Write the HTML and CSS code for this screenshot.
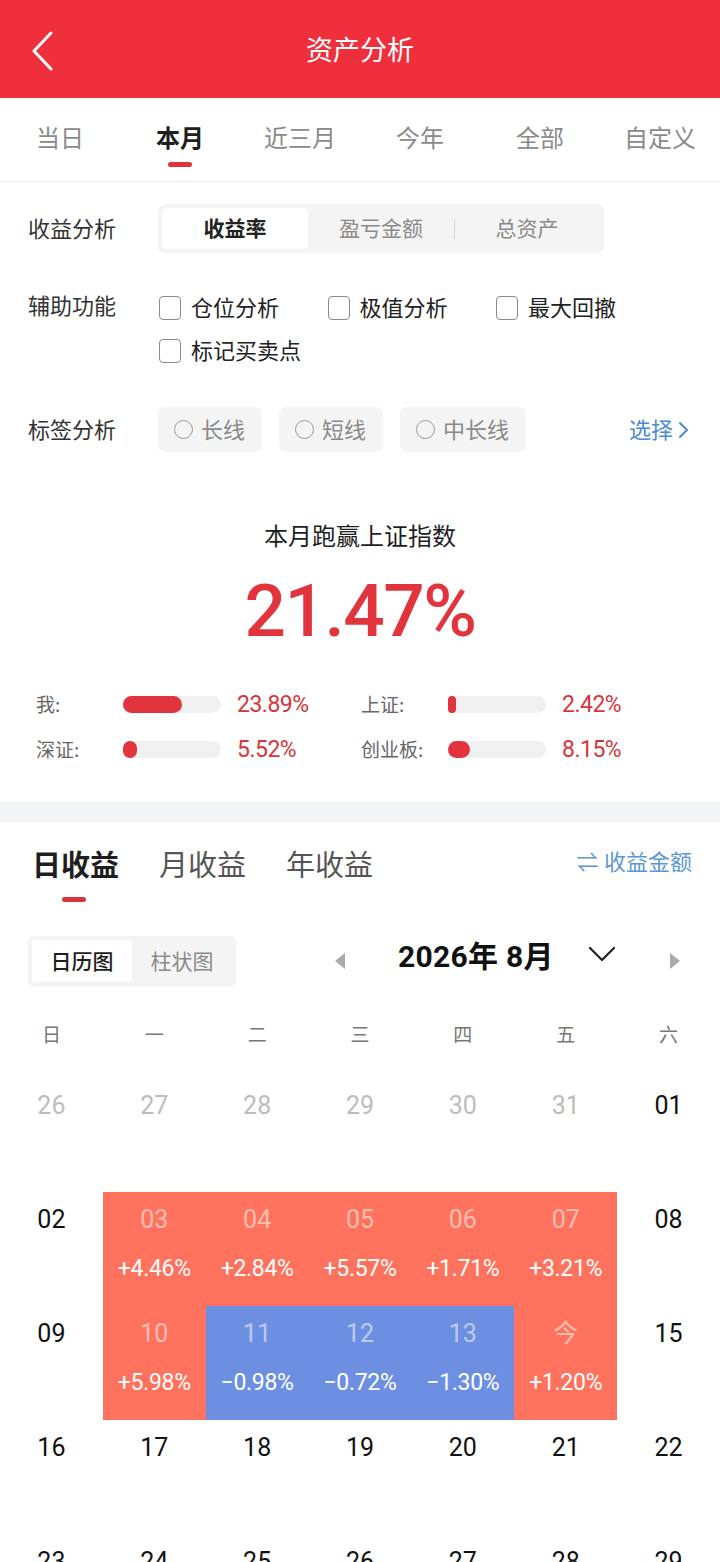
FILE: index.html
```html
<!DOCTYPE html>
<html lang="zh-CN">
<head>
<meta charset="utf-8">
<title>资产分析</title>
<link rel="stylesheet" href="styles.css">
</head>
<body>
<header class="topbar">
  <div class="back">
    <svg width="24" height="40" viewBox="0 0 24 40"><polyline points="20,2 3,20 20,38" fill="none" stroke="#fff" stroke-width="3" stroke-linecap="round" stroke-linejoin="round"/></svg>
  </div>
  <h1 class="title">资产分析</h1>
  <div></div>
</header>

<nav class="period-tabs">
  <div class="ptab">当日</div>
  <div class="ptab active">本月<span class="ind"></span></div>
  <div class="ptab">近三月</div>
  <div class="ptab">今年</div>
  <div class="ptab">全部</div>
  <div class="ptab">自定义</div>
</nav>

<section class="options">
  <div class="row row-seg">
    <div class="label">收益分析</div>
    <div class="seg">
      <div class="seg-item active">收益率</div>
      <div class="seg-item">盈亏金额</div>
      <div class="seg-div"></div>
      <div class="seg-item">总资产</div>
    </div>
  </div>
  <div class="row row-check">
    <div class="label">辅助功能</div>
    <div class="checks">
      <div class="check"><span class="box"></span>仓位分析</div>
      <div class="check"><span class="box"></span>极值分析</div>
      <div class="check"><span class="box"></span>最大回撤</div>
      <div class="check"><span class="box"></span>标记买卖点</div>
    </div>
  </div>
  <div class="row row-tags">
    <div class="label">标签分析</div>
    <div class="pills">
      <div class="pill"><span class="radio"></span>长线</div>
      <div class="pill"><span class="radio"></span>短线</div>
      <div class="pill"><span class="radio"></span>中长线</div>
    </div>
    <div class="choose">选择<svg width="12" height="18" viewBox="0 0 12 18"><polyline points="3,2 10,9 3,16" fill="none" stroke="#4a8ad6" stroke-width="2" stroke-linecap="round" stroke-linejoin="round"/></svg></div>
  </div>
</section>

<section class="summary">
  <div class="sum-title">本月跑赢上证指数</div>
  <div class="sum-value">21.47%</div>
  <div class="stats">
    <div class="stat"><span class="s-label">我:</span><span class="track"><span class="fill" style="width:59px"></span></span><span class="s-val">23.89%</span></div>
    <div class="stat"><span class="s-label">上证:</span><span class="track"><span class="fill" style="width:8px"></span></span><span class="s-val">2.42%</span></div>
    <div class="stat"><span class="s-label">深证:</span><span class="track"><span class="fill" style="width:14px"></span></span><span class="s-val">5.52%</span></div>
    <div class="stat"><span class="s-label">创业板:</span><span class="track"><span class="fill" style="width:22px"></span></span><span class="s-val">8.15%</span></div>
  </div>
</section>

<div class="band"></div>

<section class="income">
  <div class="inc-head">
    <div class="inc-tabs">
      <div class="itab active">日收益<span class="ind"></span></div>
      <div class="itab">月收益</div>
      <div class="itab">年收益</div>
    </div>
    <div class="switch">⇌ 收益金额</div>
  </div>

  <div class="cal-bar">
    <div class="toggle">
      <div class="tg-item active">日历图</div>
      <div class="tg-item">柱状图</div>
    </div>
    <div class="month-nav">
      <svg class="tri" width="12" height="18" viewBox="0 0 12 18"><polygon points="11,1 11,17 1,9" fill="#aaa"/></svg>
      <div class="month">2026年 8月</div>
      <svg class="caret" width="28" height="16" viewBox="0 0 28 16"><polyline points="2,2 14,14 26,2" fill="none" stroke="#222" stroke-width="2.2" stroke-linecap="round" stroke-linejoin="round"/></svg>
      <svg class="tri" width="12" height="18" viewBox="0 0 12 18"><polygon points="1,1 1,17 11,9" fill="#aaa"/></svg>
    </div>
  </div>

  <div class="weekdays">
    <div>日</div><div>一</div><div>二</div><div>三</div><div>四</div><div>五</div><div>六</div>
  </div>

  <div class="calendar">
    <div class="day prev"><span class="d">26</span></div>
    <div class="day prev"><span class="d">27</span></div>
    <div class="day prev"><span class="d">28</span></div>
    <div class="day prev"><span class="d">29</span></div>
    <div class="day prev"><span class="d">30</span></div>
    <div class="day prev"><span class="d">31</span></div>
    <div class="day"><span class="d">01</span></div>

    <div class="day"><span class="d">02</span></div>
    <div class="day up"><span class="d">03</span><span class="p">+4.46%</span></div>
    <div class="day up"><span class="d">04</span><span class="p">+2.84%</span></div>
    <div class="day up"><span class="d">05</span><span class="p">+5.57%</span></div>
    <div class="day up"><span class="d">06</span><span class="p">+1.71%</span></div>
    <div class="day up"><span class="d">07</span><span class="p">+3.21%</span></div>
    <div class="day"><span class="d">08</span></div>

    <div class="day"><span class="d">09</span></div>
    <div class="day up"><span class="d">10</span><span class="p">+5.98%</span></div>
    <div class="day down"><span class="d">11</span><span class="p">−0.98%</span></div>
    <div class="day down"><span class="d">12</span><span class="p">−0.72%</span></div>
    <div class="day down"><span class="d">13</span><span class="p">−1.30%</span></div>
    <div class="day up"><span class="d">今</span><span class="p">+1.20%</span></div>
    <div class="day"><span class="d">15</span></div>

    <div class="day"><span class="d">16</span></div>
    <div class="day"><span class="d">17</span></div>
    <div class="day"><span class="d">18</span></div>
    <div class="day"><span class="d">19</span></div>
    <div class="day"><span class="d">20</span></div>
    <div class="day"><span class="d">21</span></div>
    <div class="day"><span class="d">22</span></div>

    <div class="day"><span class="d">23</span></div>
    <div class="day"><span class="d">24</span></div>
    <div class="day"><span class="d">25</span></div>
    <div class="day"><span class="d">26</span></div>
    <div class="day"><span class="d">27</span></div>
    <div class="day"><span class="d">28</span></div>
    <div class="day"><span class="d">29</span></div>
  </div>
</section>
</body>
</html>
```

FILE: styles.css
```css
* { box-sizing: border-box; }
html, body { margin: 0; padding: 0; }
body {
  width: 720px;
  background: #fff;
  font-family: Roboto, "Noto Sans CJK SC", sans-serif;
  color: #222;
  overflow: hidden;
}

/* header */
.topbar {
  height: 98px;
  background: #ef2f3b;
  display: grid;
  grid-template-columns: 1fr auto 1fr;
  align-items: center;
}
.back { padding-left: 31px; display: flex; align-items: center; padding-top: 4px; }
.title {
  margin: 0;
  font-size: 27px;
  font-weight: 400;
  color: #fff;
  font-family: "Noto Sans CJK SC", sans-serif;
  margin-top: -2px;
}

/* period tabs */
.period-tabs {
  display: grid;
  grid-template-columns: repeat(6, 1fr);
  height: 84px;
  border-bottom: 1px solid #ececec;
}
.ptab {
  display: flex;
  flex-direction: column;
  align-items: center;
  padding-top: 22px;
  font-size: 24px;
  line-height: 34px;
  color: #8a8a8a;
  font-family: "Noto Sans CJK SC", sans-serif;
}
.ptab.active { color: #1e1e1e; font-weight: 700; }
.ptab .ind {
  display: block;
  width: 24px;
  height: 5px;
  border-radius: 3px;
  background: #e0323b;
  margin-top: 8px;
}

/* options */
.options { padding: 22px 0 0 28px; font-family: "Noto Sans CJK SC", sans-serif; }
.row { display: flex; align-items: flex-start; }
.label {
  width: 130px;
  flex: none;
  font-size: 22px;
  color: #333;
  margin-top: -3px;
}
.row-seg { align-items: center; }
.seg {
  display: flex;
  align-items: center;
  width: 446px;
  height: 49px;
  padding: 4px;
  background: #f4f4f4;
  border-radius: 7px;
}
.seg-item {
  width: 146px;
  height: 41px;
  display: flex;
  align-items: center;
  justify-content: center;
  font-size: 21px;
  color: #8a8a8a;
  border-radius: 5px;
  padding-bottom: 3px;
}
.seg-item.active { background: #fff; color: #222; font-weight: 700; }
.seg-div { width: 1px; height: 20px; background: #d8d8d8; margin: 0 -0.5px; }

.row-check { margin-top: 33px; }
.row-check .label { line-height: 43px; }
.checks {
  display: grid;
  grid-template-columns: repeat(3, 168.5px);
}
.check {
  display: flex;
  align-items: center;
  gap: 10px;
  height: 43px;
  font-size: 22px;
  color: #222;
}
.check .box { margin-top: 3px; }
.check { padding-bottom: 3px; }
.box {
  width: 22px;
  height: 24px;
  border: 1.5px solid #8a8a8a;
  border-radius: 4px;
  flex: none;
  margin-left: 1px;
}

.row-tags { margin-top: 35px; align-items: center; }
.pills { display: flex; gap: 17px; }
.pill {
  height: 45px;
  padding: 0 17px 3px 16px;
  display: flex;
  align-items: center;
  gap: 8px;
  background: #f4f4f4;
  border-radius: 7px;
  font-size: 22px;
  color: #8a8a8a;
}
.radio {
  width: 19px;
  height: 19px;
  border: 1.5px solid #9a9a9a;
  border-radius: 50%;
  flex: none;
  margin-top: 3px;
}
.choose {
  margin-left: auto;
  margin-right: 31px;
  display: flex;
  align-items: center;
  gap: 4px;
  font-size: 22px;
  color: #4a8ad6;
  padding-bottom: 4px;
}
.choose svg { margin-top: 4px; }

/* summary */
.summary { padding-top: 66px; text-align: center; }
.sum-title {
  font-size: 24px;
  line-height: 34px;
  color: #1e1e1e;
  font-family: "Noto Sans CJK SC", sans-serif;
}
.sum-value {
  margin-top: 19px;
  font-size: 73px;
  line-height: 80px;
  font-weight: 500;
  color: #e2343d;
  letter-spacing: -1.5px;
}
.stats {
  margin-top: 31px;
  padding-left: 36px;
  display: grid;
  grid-template-columns: 325px 325px;
  text-align: left;
}
.stat { display: flex; align-items: center; height: 45px; }
.s-label {
  width: 87px;
  font-size: 19px;
  color: #666;
  font-family: "Noto Sans CJK SC", sans-serif;
  margin-top: -3px;
}
.track {
  width: 98px;
  height: 17px;
  border-radius: 9px;
  background: #f0f0f0;
  display: flex;
}
.fill { height: 17px; border-radius: 9px; background: #e2343d; min-width: 8px; }
.s-val {
  margin-left: 16px;
  font-size: 23px;
  color: #d8343c;
  letter-spacing: -0.5px;
}

.band { height: 20px; background: #f3f4f6; margin-top: 30px; }

/* income */
.inc-head {
  display: flex;
  align-items: flex-start;
  justify-content: space-between;
  padding: 21px 28px 0 32px;
}
.inc-tabs { display: flex; gap: 40px; }
.itab {
  display: flex;
  flex-direction: column;
  align-items: center;
  font-size: 29px;
  line-height: 40px;
  color: #555;
  font-family: "Noto Sans CJK SC", sans-serif;
}
.itab.active { color: #1e1e1e; font-weight: 700; }
.itab .ind {
  width: 24px;
  height: 5px;
  border-radius: 3px;
  background: #d8343c;
  margin-top: 14px;
  margin-left: -4px;
}
.switch {
  font-size: 22px;
  line-height: 40px;
  color: #5b97d3;
  margin-top: 0;
}

.cal-bar {
  display: flex;
  align-items: center;
  margin-top: 34px;
  padding-left: 28px;
}
.toggle {
  display: flex;
  width: 208px;
  height: 50px;
  padding: 4px;
  background: #f4f4f4;
  border-radius: 5px;
}
.tg-item {
  width: 101px;
  display: flex;
  align-items: center;
  justify-content: center;
  font-size: 21px;
  color: #8a8a8a;
  font-family: "Noto Sans CJK SC", sans-serif;
  border-radius: 4px;
  padding-bottom: 3px;
}
.tg-item.active { background: #fff; color: #1e1e1e; font-weight: 500; }
.month-nav {
  display: flex;
  align-items: center;
  margin-left: 98px;
}
.month {
  margin-left: 52px;
  font-size: 30px;
  font-weight: 700;
  color: #111;
  margin-top: -14px;
  letter-spacing: 0.3px;
}
.caret { margin-left: 34px; margin-top: -14px; }
.month-nav .tri:last-child { margin-left: 53px; }

.weekdays {
  display: grid;
  grid-template-columns: repeat(7, 1fr);
  margin-top: 28px;
  height: 40px;
  line-height: 40px;
  text-align: center;
  font-size: 19px;
  color: #777;
  font-family: "Noto Sans CJK SC", sans-serif;
}

.calendar {
  display: grid;
  grid-template-columns: repeat(7, 1fr);
  grid-auto-rows: 114px;
  margin-top: 24px;
}
.day {
  display: flex;
  flex-direction: column;
  align-items: center;
  padding-top: 14px;
}
.day .d { font-size: 25px; line-height: 28px; color: #111; }
.day.prev .d { color: #bcbcbc; }
.day .p {
  margin-top: 21px;
  font-size: 23px;
  line-height: 28px;
  color: #fff;
  letter-spacing: -0.3px;
}
.day.up { background: #ff735e; }
.day.down { background: #6d8fe2; }
.day.up .d, .day.down .d { color: rgba(255,255,255,0.55); }
```
